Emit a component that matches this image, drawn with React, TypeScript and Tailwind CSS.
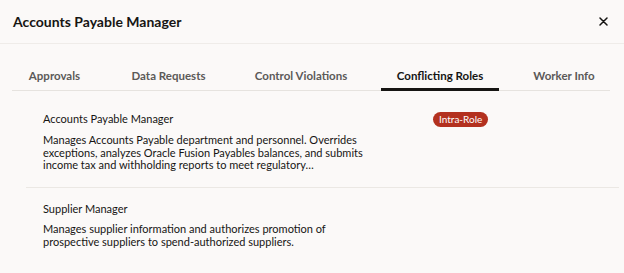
import React from "react";

const tabs = [
  { label: "Approvals", w: "w-[85px]" },
  { label: "Data Requests", w: "w-[105px]" },
  { label: "Control Violations", w: "w-[122px]" },
  { label: "Conflicting Roles", w: "w-[118px]", active: true },
  { label: "Worker Info", w: "w-[92px]" },
];

export default function App() {
  return (
    <div className="w-[624px] h-[273px] overflow-hidden bg-[#fbf9f8] text-[#161513] font-['Lato',sans-serif]">
      <div className="h-[44px] flex items-center justify-between pl-[13px] pr-[16px] border-b border-[#efece9]">
        <h1 className="text-[14px] font-bold leading-none">Accounts Payable Manager</h1>
        <svg width="9" height="9" viewBox="0 0 9 9" className="text-[#161513]">
          <path d="M1 1L8 8M8 1L1 8" stroke="currentColor" strokeWidth="1.5" strokeLinecap="round" />
        </svg>
      </div>
      <div className="pt-[16px] ml-[26px] w-[584px]">
        <div className="flex border-b border-[#e6e3df] -ml-[14px] pl-[14px]">
          <div className="flex -ml-[14px] gap-[19px]">
            {tabs.map((t) => (
              <div
                key={t.label}
                className={
                  t.label === "Conflicting Roles"
                    ? `${t.w} h-[31px] -mb-px flex items-center justify-center border-b-[3px] border-[#161513] pt-[3px] text-[11.5px] font-bold text-[#161513]`
                    : `${t.w} h-[31px] -mb-px flex items-center justify-center border-b-[3px] border-transparent pt-[3px] text-[11.5px] font-bold text-[#5b5a58]`
                }
              >
                {t.label}
              </div>
            ))}
          </div>
        </div>
      </div>
      <div className="pt-[8px] ml-[26px] w-[593px]">
        <div className="pl-[17px] pt-[12px] pb-[15px] border-b border-[#ebe8e4]">
          <div className="flex items-center h-[16px]">
            <div className="w-[390px] text-[11px] leading-[16px]">Accounts Payable Manager</div>
            <span className="h-[15px] px-[6px] rounded-full bg-[#b3311f] text-white text-[10px] leading-[15px]">
              Intra-Role
            </span>
          </div>
          <p className="mt-[7px] w-[329px] text-[11px] leading-[12.7px]">
            Manages Accounts Payable department and personnel. Overrides exceptions, analyzes Oracle Fusion Payables
            balances, and submits income tax and withholding reports to meet regulatory…
          </p>
        </div>
        <div className="pl-[17px] pt-[13px]">
          <div className="text-[11px] leading-[16px]">Supplier Manager</div>
          <p className="mt-[6px] w-[329px] text-[11px] leading-[12.7px]">
            Manages supplier information and authorizes promotion of prospective suppliers to spend-authorized suppliers.
          </p>
        </div>
      </div>
    </div>
  );
}
